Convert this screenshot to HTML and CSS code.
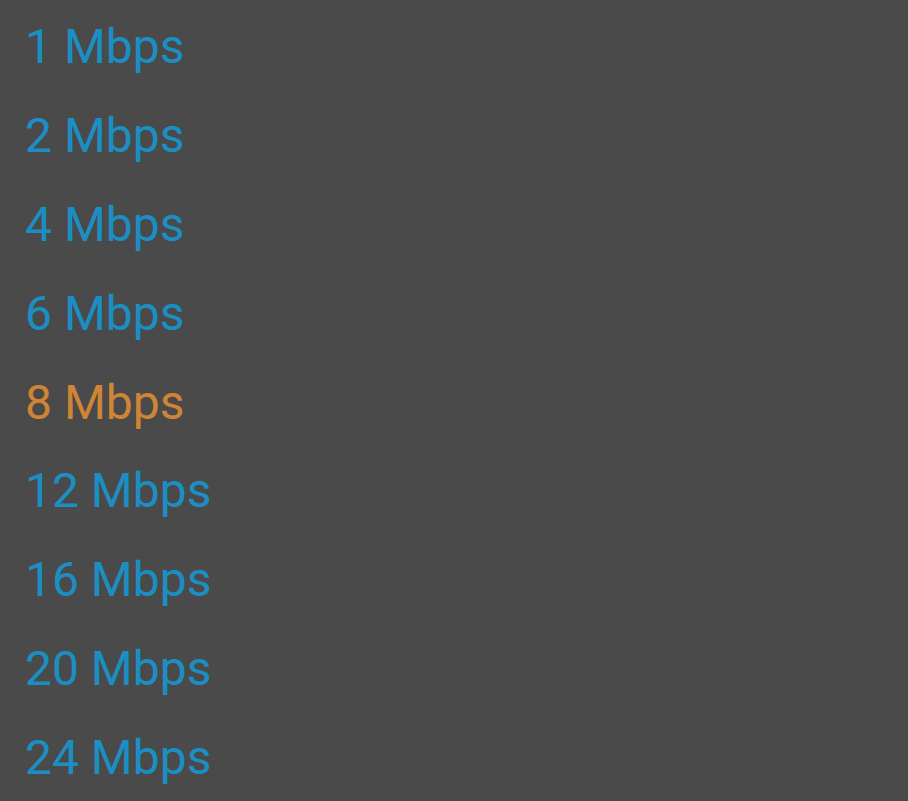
FILE: index.html
```html
<!DOCTYPE html>
<html>
<head>
<meta charset="utf-8">
<link rel="stylesheet" href="styles.css">
</head>
<body>
<ul class="list">
  <li class="item">1 Mbps</li>
  <li class="item">2 Mbps</li>
  <li class="item">4 Mbps</li>
  <li class="item">6 Mbps</li>
  <li class="item item-active">8 Mbps</li>
  <li class="item">12 Mbps</li>
  <li class="item">16 Mbps</li>
  <li class="item">20 Mbps</li>
  <li class="item">24 Mbps</li>
</ul>
</body>
</html>
```
FILE: styles.css
```css
html, body {
  margin: 0;
  padding: 0;
  background: #4a4a4a;
  height: 100%;
  overflow: hidden;
}
.list {
  list-style: none;
  margin: 0;
  padding: 3px 0 0 25px;
  font-family: Roboto, "Noto Sans", sans-serif;
}
.item {
  font-size: 48px;
  line-height: 88.9px;
  height: 88.9px;
  color: #1b8fc4;
}
.item-active {
  color: #cf8535;
}
```
